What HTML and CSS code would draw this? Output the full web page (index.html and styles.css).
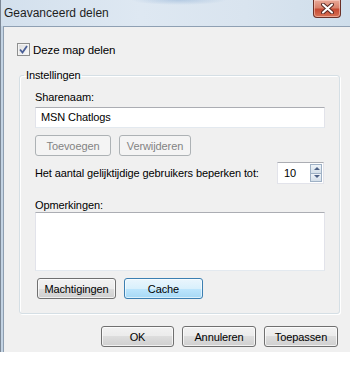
FILE: index.html
```html
<!DOCTYPE html>
<html lang="nl">
<head>
    <meta charset="UTF-8">
    <title>Geavanceerd delen</title>
    <link rel="stylesheet" href="styles.css">
</head>
<body>
    <div class="window">
        <div class="titlebar">
            <span class="title">Geavanceerd delen</span>
            <button class="close" title="Sluiten">
                <svg width="13" height="11" viewBox="0 0 13 11">
                    <path d="M2 1.5 L11 9.5 M11 1.5 L2 9.5" stroke="#5a2a24" stroke-width="4" stroke-linecap="round"/>
                    <path d="M2 1.5 L11 9.5 M11 1.5 L2 9.5" stroke="#ffffff" stroke-width="2" stroke-linecap="round"/>
                </svg>
            </button>
        </div>

        <div class="client">
            <label class="check-row">
                <span class="checkbox">
                    <svg width="9" height="9" viewBox="0 0 9 9">
                        <path d="M1 4.5 L3.5 7.5 L8 1" fill="none" stroke="#4a5f97" stroke-width="1.8"/>
                    </svg>
                </span>
                Deze map delen
            </label>

            <fieldset class="group">
                <legend>Instellingen</legend>

                <div class="field-label">Sharenaam:</div>
                <div class="textbox">MSN Chatlogs</div>

                <div class="button-row">
                    <button class="btn disabled wide-1">Toevoegen</button>
                    <button class="btn disabled wide-2">Verwijderen</button>
                </div>

                <div class="limit-row">
                    <span>Het aantal gelijktijdige gebruikers beperken tot:</span>
                    <div class="spin">
                        <span class="spin-value">10</span>
                        <div class="spin-buttons">
                            <span class="spin-btn up"></span>
                            <span class="spin-btn down"></span>
                        </div>
                    </div>
                </div>

                <div class="field-label notes-label">Opmerkingen:</div>
                <div class="textarea"></div>

                <div class="button-row perm-row">
                    <button class="btn wide-3">Machtigingen</button>
                    <button class="btn focused wide-3">Cache</button>
                </div>
            </fieldset>

            <div class="dialog-buttons">
                <button class="btn footer ok">OK</button>
                <button class="btn footer">Annuleren</button>
                <button class="btn footer">Toepassen</button>
            </div>
        </div>
    </div>
</body>
</html>
```

FILE: styles.css
```css
body, html {
    margin: 0;
    padding: 0;
    background-color: #ffffff;
    font-family: "Liberation Sans", Arial, sans-serif;
    font-size: 11px;
    letter-spacing: -0.1px;
    color: #000000;
    overflow: hidden;
}

.window {
    width: 347px;
    height: 352px;
    display: flex;
    flex-direction: column;
    border-left: 1px solid #7c8896;
    background: linear-gradient(to right, #c3d3e3 0, #c3d3e3 2px, transparent 2px);
    padding-left: 2px;
}

.titlebar {
    height: 26px;
    margin-left: -2px;
    display: flex;
    align-items: flex-start;
    background:
        radial-gradient(ellipse 48px 5px at 178px 0, rgba(120, 160, 205, 0.4), rgba(120, 160, 205, 0)),
        linear-gradient(to right, #d3e0ed, #dee8f2 40%, #d9e4ef 70%, #cfdeeb);
}

.title {
    padding: 6px 0 0 3px;
    font-size: 12px;
    letter-spacing: 0;
    color: #1e1e1e;
}

.close {
    margin-left: auto;
    margin-right: 9px;
    width: 28px;
    height: 18px;
    padding: 0;
    display: flex;
    align-items: center;
    justify-content: center;
    border: 1px solid #6b3027;
    border-top: none;
    border-radius: 0 0 4px 4px;
    background: linear-gradient(to bottom, #e9a999 0, #d9826c 45%, #c64a33 55%, #d87255 100%);
    box-shadow: inset 0 0 0 1px rgba(255, 220, 210, 0.5);
}

.client {
    flex: 1;
    border-top: 1px solid #8fa0b3;
    border-left: 1px solid #8e9eb0;
    background-color: #f0f0f0;
    padding: 16px 0 0 13px;
}

.check-row {
    display: flex;
    align-items: center;
    height: 13px;
    gap: 3px;
    font-size: 11.5px;
}

.checkbox {
    width: 11px;
    height: 11px;
    border: 1px solid #8e8f8f;
    background: linear-gradient(135deg, #dcdcdc, #fbfbfb);
    display: flex;
    align-items: center;
    justify-content: center;
    box-shadow: inset 0 0 0 1px #f4f4f4;
}

.group {
    width: 290px;
    margin: 12px 0 0 2px;
    padding: 8px 14px 14px 15px;
    border: 1px solid #d5dfe5;
    border-radius: 3px;
    box-shadow: inset 1px 1px 0 #ffffff, 1px 1px 0 #ffffff;
}

.group legend {
    margin-left: -11px;
    padding: 0 2px;
    line-height: 14px;
}

.field-label {
    line-height: 15px;
}

.textbox {
    margin-top: 2px;
    height: 19px;
    line-height: 19px;
    padding: 0 5px;
    background-color: #ffffff;
    border: 1px solid #e2e3ea;
    border-top-color: #abadb3;
    border-bottom-color: #e3e9ef;
}

.button-row {
    display: flex;
    gap: 8px;
    margin-top: 7px;
}

.btn {
    height: 21px;
    padding: 0;
    font-family: inherit;
    font-size: 11px;
    letter-spacing: -0.1px;
    color: #000000;
    border: 1px solid #707070;
    border-radius: 3px;
    background: linear-gradient(to bottom, #f2f2f2 0, #ebebeb 50%, #dddddd 50%, #cfcfcf 100%);
    box-shadow: inset 0 0 0 1px rgba(255, 255, 255, 0.7);
}

.btn.disabled {
    color: #838383;
    border-color: #adb2b5;
    background: #f4f4f4;
    box-shadow: none;
}

.btn.focused {
    border-color: #3c7fb1;
    background: linear-gradient(to bottom, #eaf6fd 0, #d9f0fc 50%, #bee6fd 50%, #a7d9f5 100%);
    box-shadow: inset 0 0 0 1px rgba(255, 255, 255, 0.6);
}

.wide-1 { width: 76px; }
.wide-2 { width: 72px; }
.wide-3 { width: 79px; }

.limit-row {
    display: flex;
    align-items: center;
    justify-content: space-between;
    margin-top: 6px;
    height: 22px;
    white-space: nowrap;
}

.spin {
    width: 45px;
    height: 20px;
    display: flex;
    align-items: center;
    background-color: #ffffff;
    border: 1px solid #e2e3ea;
    border-top-color: #abadb3;
    margin-right: 1px;
}

.spin-value {
    flex: 1;
    padding-left: 6px;
}

.spin-buttons {
    display: flex;
    flex-direction: column;
    width: 12px;
    height: 18px;
    margin-right: 1px;
}

.spin-btn {
    flex: 1;
    position: relative;
    border: 1px solid #9fb1c5;
    background: linear-gradient(to bottom, #eef3f8, #d4dfe9);
}

.spin-btn.down {
    border-top: none;
}

.spin-btn::after {
    content: "";
    position: absolute;
    left: 3px;
    top: 2px;
    border-left: 3px solid transparent;
    border-right: 3px solid transparent;
}

.spin-btn.up::after {
    border-bottom: 3px solid #4d6185;
}

.spin-btn.down::after {
    top: 1px;
    border-top: 3px solid #4d6185;
}

.notes-label {
    margin-top: 14px;
    line-height: 14px;
}

.textarea {
    height: 57px;
    background-color: #ffffff;
    border: 1px solid #e2e3ea;
    border-top-color: #abadb3;
    border-bottom-color: #e3e9ef;
}

.perm-row {
    margin-left: 2px;
}

.dialog-buttons {
    display: flex;
    gap: 8px;
    width: 321px;
    justify-content: flex-end;
    margin-top: 12px;
}

.btn.footer {
    width: 74px;
}

.btn.ok {
    width: 73px;
}
```
